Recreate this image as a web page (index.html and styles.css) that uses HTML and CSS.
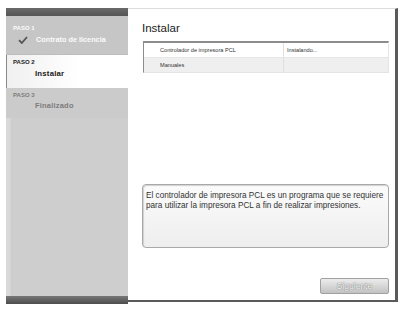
FILE: index.html
```html
<!DOCTYPE html>
<html>
<head>
<meta charset="utf-8">
<link rel="stylesheet" href="styles.css">
</head>
<body>
<div class="window">
  <aside class="sidebar">
    <div class="side-cap"></div>
    <div class="step done">
      <div class="step-label">PASO 1</div>
      <div class="step-name"><span class="check"><svg width="10" height="8" viewBox="0 0 10 8"><path d="M1 4.2 L3.8 7 L9 1" fill="none" stroke="#555" stroke-width="1.8"/></svg></span>Contrato de licencia</div>
    </div>
    <div class="step current">
      <div class="step-label">PASO 2</div>
      <div class="step-name">Instalar</div>
    </div>
    <div class="step todo">
      <div class="step-label">PASO 3</div>
      <div class="step-name">Finalizado</div>
    </div>
    <div class="side-fill"></div>
    <div class="side-cap bottom"></div>
  </aside>
  <main class="main">
    <h1 class="title">Instalar</h1>
    <div class="table">
      <div class="row">
        <div class="cell name">Controlador de impresora PCL</div>
        <div class="cell status">Instalando...</div>
      </div>
      <div class="row alt">
        <div class="cell name">Manuales</div>
        <div class="cell status"></div>
      </div>
    </div>
    <div class="desc">El controlador de impresora PCL es un programa que se requiere para utilizar la impresora PCL a fin de realizar impresiones.</div>
    <div class="actions">
      <button class="btn" disabled>Siguiente</button>
    </div>
  </main>
</div>
</body>
</html>
```
FILE: styles.css
```css
html, body {
  margin: 0;
  padding: 0;
  background: #ffffff;
  width: 403px;
  height: 309px;
  overflow: hidden;
  font-family: "Liberation Sans", Arial, sans-serif;
}
.window {
  display: flex;
  padding: 8px 0 0 6px;
}
.sidebar {
  width: 122px;
  height: 296px;
  display: flex;
  flex-direction: column;
  background: linear-gradient(to right, #d9d9d9 0, #d9d9d9 4px, #cecece 5px, #cecece 100%);
}
.side-cap {
  height: 8px;
  background: linear-gradient(#6a6a6a, #555555);
  flex: none;
}
.side-cap.bottom {
  background: linear-gradient(#777777, #4d4d4d);
}
.step {
  flex: none;
  padding-left: 7px;
}
.step-label {
  font-size: 6px;
  font-weight: bold;
  line-height: 8px;
}
.step-name {
  font-size: 7.5px;
  font-weight: bold;
  letter-spacing: 0.2px;
  line-height: 10px;
  padding-left: 22px;
  display: flex;
  align-items: center;
}
.step.done {
  height: 39px;
  box-sizing: border-box;
  padding-top: 8px;
  background: #c6c6c6;
  border-bottom: 1px solid #bdbdbd;
  color: #fbfbfb;
}
.step.done .step-name {
  padding-left: 5px;
  margin-top: 3px;
  letter-spacing: 0;
  font-size: 7.3px;
}
.check {
  width: 18px;
  display: inline-flex;
}
.step.current {
  height: 33px;
  box-sizing: border-box;
  padding-top: 3px;
  background: linear-gradient(to right, #f0f0f0, #ffffff 60%);
  border-left: 1px solid #8a8a8a;
  padding-left: 6px;
  color: #1a1a1a;
}
.step.current .step-label {
  color: #222;
}
.step.current .step-name {
  font-size: 7.8px;
  margin-top: 3px;
}
.step.todo {
  height: 30px;
  box-sizing: border-box;
  padding-top: 3px;
  color: #7c7c7c;
  background: #cbcbcb;
}
.step.todo .step-name {
  margin-top: 2px;
}
.side-fill {
  flex: 1;
}
.main {
  width: 270px;
  height: 294px;
  box-sizing: border-box;
  border-top: 1px solid #dcdcdc;
  border-right: 3px solid #5a5a5a;
  border-bottom: 2px solid #5a5a5a;
  display: flex;
  flex-direction: column;
  padding-left: 14px;
  padding-right: 6px;
}
.title {
  margin: 12px 0 0 0;
  font-weight: normal;
  font-size: 11.5px;
  line-height: 14px;
  color: #222222;
}
.table {
  margin-top: 6px;
  margin-left: 1px;
  border-top: 2px solid #8c8c8c;
  border-left: 1px solid #8c8c8c;
  border-bottom: 1px solid #e4e4e4;
  border-right: 1px solid #e4e4e4;
}
.row {
  display: flex;
  height: 14px;
  align-items: center;
  font-size: 5.6px;
  color: #333333;
}
.row.alt {
  background: #efefef;
  border-top: 1px solid #e6e6e6;
}
.cell.name {
  width: 123px;
  padding-left: 16px;
  align-self: stretch;
  display: flex;
  align-items: center;
  border-right: 1px solid #e0e0e0;
}
.cell.status {
  padding-left: 3px;
}
.desc {
  margin-top: 111px;
  height: 64px;
  box-sizing: border-box;
  border: 1px solid #a9a9a9;
  border-radius: 4px;
  background: linear-gradient(#fbfbfb, #eeeeee);
  box-shadow: inset 1px 1px 1px #d0d0d0;
  padding: 6px 3px 0 3px;
  font-size: 8.2px;
  line-height: 9.5px;
  color: #333333;
}
.actions {
  margin-top: 30px;
  display: flex;
  justify-content: flex-end;
}
.btn {
  width: 69px;
  height: 16px;
  margin: 0;
  padding: 0;
  border: 1px solid #a0a0a0;
  border-radius: 2px;
  background: linear-gradient(#ececec, #c2c2c2);
  color: #f8f8f8;
  text-shadow: 0 0 1px #7a7a7a, 0 0 1px #7a7a7a;
  font-family: "Liberation Sans", Arial, sans-serif;
  font-size: 8.5px;
  line-height: 14px;
}
```
